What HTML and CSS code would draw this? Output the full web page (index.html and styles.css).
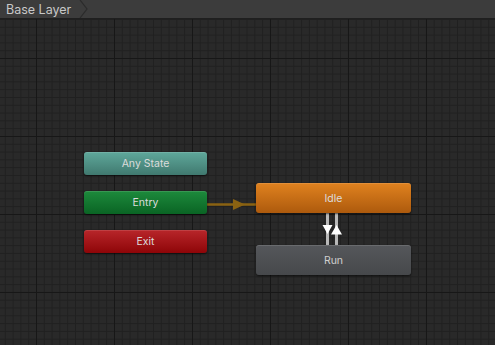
FILE: index.html
```html
<!DOCTYPE html>
<html lang="en">
<head>
  <meta charset="UTF-8">
  <meta name="viewport" content="width=device-width, initial-scale=1.0">
  <title>Animator - Base Layer</title>
  <link rel="stylesheet" href="styles.css">
</head>
<body>

  <header class="toolbar">
    <div class="crumb">
      <span>Base Layer</span>
      <svg class="crumb-arrow" width="10" height="18" viewBox="0 0 10 18">
        <polyline points="1,0 8,9 1,18" fill="none" stroke="#2b2b2b" stroke-width="1.2"/>
      </svg>
    </div>
  </header>

  <main class="graph">
    <!-- transitions -->
    <svg class="edges" width="495" height="326" viewBox="0 0 495 326">
      <line x1="207" y1="185.5" x2="256" y2="185.5" stroke="#8a6212" stroke-width="2.5"/>
      <polygon points="233,180 245,185.5 233,191" fill="#8a6212"/>

      <rect x="326" y="194" width="3" height="32" fill="#b9b9b9"/>
      <rect x="335" y="194" width="3" height="32" fill="#b9b9b9"/>
      <polygon points="322.5,206 332.5,206 327.5,215" fill="#fff"/>
      <polygon points="331,215.5 342,215.5 336.5,206" fill="#fff"/>
    </svg>

    <div class="node any" style="left:84px; top:133px;">Any State</div>
    <div class="node entry" style="left:84px; top:172px;">Entry</div>
    <div class="node exit" style="left:84px; top:211px;">Exit</div>
    <div class="node state idle" style="left:256px; top:164px;">Idle</div>
    <div class="node state run" style="left:256px; top:226px;">Run</div>
  </main>

</body>
</html>
```

FILE: styles.css
```css
* {
  margin: 0;
  padding: 0;
  box-sizing: border-box;
}

body {
  font-family: Inter, 'Noto Sans', sans-serif;
  width: 495px;
  height: 345px;
  overflow: hidden;
  background: #282828;
}

.toolbar {
  height: 19px;
  background: #3c3c3c;
  border-bottom: 1px solid #1f1f1f;
  display: flex;
  align-items: stretch;
}

.crumb {
  display: flex;
  align-items: center;
  color: #c8c8c8;
  font-size: 12.5px;
  padding-left: 6px;
}

.crumb-arrow {
  margin-left: 8px;
}

.graph {
  position: relative;
  height: 326px;
  background-color: #292929;
  background-image:
    linear-gradient(to right, #171717 1px, transparent 1px),
    linear-gradient(to bottom, #171717 1px, transparent 1px),
    linear-gradient(to right, #202020 1px, transparent 1px),
    linear-gradient(to bottom, #202020 1px, transparent 1px);
  background-size: 78px 78px, 78px 78px, 7.8px 7.8px, 7.8px 7.8px;
  background-position: 36px 39px, 36px 39px, 36px 39px, 36px 39px;
}

.edges {
  position: absolute;
  left: 0;
  top: 0;
}

.node {
  position: absolute;
  width: 123px;
  height: 23px;
  border-radius: 3px;
  display: flex;
  align-items: center;
  justify-content: center;
  font-size: 10.5px;
  color: #dcdcdc;
  box-shadow: 0 1px 2px rgba(0, 0, 0, 0.6), inset 0 1px 0 rgba(255, 255, 255, 0.12);
}

.state {
  width: 155px;
  height: 30px;
}

.any {
  background: linear-gradient(#5fa89b, #40796f);
}

.entry {
  background: linear-gradient(#1d8a3c, #0a6424);
}

.exit {
  background: linear-gradient(#b8262a, #8e0508);
}

.idle {
  background: linear-gradient(#e0821f, #ad5a0d);
}

.run {
  background: linear-gradient(#55575b, #46484b);
  color: #cfcfcf;
}
```
